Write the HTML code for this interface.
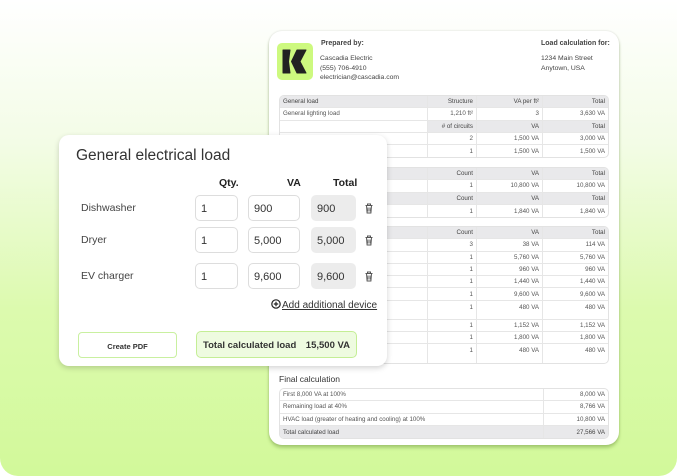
<!DOCTYPE html>
<html><head><meta charset="utf-8"><style>
*{box-sizing:border-box;margin:0;padding:0}
html,body{width:677px;height:476px;overflow:hidden;background:#fff}
body{font-family:"Liberation Sans",sans-serif;color:#222;position:relative}
.bg{position:absolute;left:0;top:0;width:677px;height:476px;border-radius:0 0 18px 18px;background:linear-gradient(180deg,#ffffff 0%,#f3fce6 30%,#dcfaae 65%,#d2f99a 100%)}
.doc{position:absolute;left:269px;top:31px;width:350px;height:414px;background:#fff;border-radius:13px;box-shadow:0 3px 3px rgba(90,130,40,.35),0 0 2px rgba(0,0,0,.15)}
.t{position:absolute;font-size:6.8px;color:#444}
table{position:absolute;left:10px;width:330px;border-collapse:separate;border-spacing:0;border:1px solid #e2e2e2;border-radius:5px;overflow:hidden;font-size:6.2px;color:#555}
td{height:12.3px;padding:0 3px;border-bottom:1px solid #e6e6e6;border-right:1px solid #e6e6e6;white-space:nowrap}
td:last-child{border-right:none}
tr:last-child td{border-bottom:none}
.h td{background:#e9e9eb;color:#444}
.r{text-align:right}
.card{position:absolute;left:59px;top:135px;width:328px;height:231px;background:#fff;border-radius:10px;box-shadow:0 2px 6px rgba(0,0,0,.18)}
.in{position:absolute;height:26px;border:1px solid #ddd;border-radius:5px;font-size:11px;padding:7px 0 0 5px;color:#333}
.gr{background:#ececec;border-color:#ececec}
.lbl{position:absolute;left:22px;font-size:10.5px;color:#444}
.hd{position:absolute;top:42px;font-size:10.5px;font-weight:bold;color:#222}
.tr{position:absolute;left:305px;width:10px;height:11px}
</style></head><body>
<div class="bg"></div>
<div class="doc">
  <svg style="position:absolute;left:8px;top:12px" width="36" height="37" viewBox="0 0 36 37"><rect width="36" height="37" rx="5" fill="#cdf97f"/><path d="M6 7h7l-1.5 11.5L13 30H6z" fill="#222" stroke="#222" stroke-width="1" stroke-linejoin="round"/><path d="M20 7h9l-6 11.5 6 11.5h-9l-5.5-11.5z" fill="#222" stroke="#222" stroke-width="1" stroke-linejoin="round"/></svg>
  <div class="t" style="left:52px;top:9px;font-weight:bold;font-size:7px">Prepared by:</div>
  <div class="t" style="left:51px;top:23px;line-height:9.5px">Cascadia Electric<br>(555) 706-4910<br>electrician@cascadia.com</div>
  <div class="t" style="left:272px;top:9px;font-weight:bold;font-size:7px">Load calculation for:</div>
  <div class="t" style="left:272px;top:23px;line-height:9.5px">1234 Main Street<br>Anytown, USA</div>
  <table style="top:64px"><colgroup><col style="width:148px"><col style="width:49px"><col style="width:66px"><col></colgroup>
  <tr class="h"><td>General load</td><td class="r">Structure</td><td class="r">VA per ft²</td><td class="r">Total</td></tr>
  <tr><td>General lighting load</td><td class="r">1,210 ft²</td><td class="r">3</td><td class="r">3,630 VA</td></tr>
  <tr class="h"><td style="background:#fff"></td><td class="r">&#35; of circuits</td><td class="r">VA</td><td class="r">Total</td></tr>
  <tr><td></td><td class="r">2</td><td class="r">1,500 VA</td><td class="r">3,000 VA</td></tr>
  <tr><td></td><td class="r">1</td><td class="r">1,500 VA</td><td class="r">1,500 VA</td></tr></table>
  <table style="top:136px"><colgroup><col style="width:148px"><col style="width:49px"><col style="width:66px"><col></colgroup>
  <tr class="h"><td></td><td class="r">Count</td><td class="r">VA</td><td class="r">Total</td></tr>
  <tr><td></td><td class="r">1</td><td class="r">10,800 VA</td><td class="r">10,800 VA</td></tr>
  <tr class="h"><td></td><td class="r">Count</td><td class="r">VA</td><td class="r">Total</td></tr>
  <tr><td></td><td class="r">1</td><td class="r">1,840 VA</td><td class="r">1,840 VA</td></tr></table>
  <table style="top:195px"><colgroup><col style="width:148px"><col style="width:49px"><col style="width:66px"><col></colgroup>
  <tr class="h"><td></td><td class="r">Count</td><td class="r">VA</td><td class="r">Total</td></tr>
  <tr><td>tinuous</td><td class="r">3</td><td class="r">38 VA</td><td class="r">114 VA</td></tr>
  <tr><td>ous</td><td class="r">1</td><td class="r">5,760 VA</td><td class="r">5,760 VA</td></tr>
  <tr><td></td><td class="r">1</td><td class="r">960 VA</td><td class="r">960 VA</td></tr>
  <tr><td></td><td class="r">1</td><td class="r">1,440 VA</td><td class="r">1,440 VA</td></tr>
  <tr><td></td><td class="r">1</td><td class="r">9,600 VA</td><td class="r">9,600 VA</td></tr>
  <tr><td style="height:19px;vertical-align:top;padding-top:3px">20V, Non-con-</td><td class="r" style="vertical-align:top;padding-top:3px">1</td><td class="r" style="vertical-align:top;padding-top:3px">480 VA</td><td class="r" style="vertical-align:top;padding-top:3px">480 VA</td></tr>
  <tr><td></td><td class="r">1</td><td class="r">1,152 VA</td><td class="r">1,152 VA</td></tr>
  <tr><td></td><td class="r">1</td><td class="r">1,800 VA</td><td class="r">1,800 VA</td></tr>
  <tr><td style="height:19px;vertical-align:top;padding-top:3px">/4 HP, 120V,</td><td class="r" style="vertical-align:top;padding-top:3px">1</td><td class="r" style="vertical-align:top;padding-top:3px">480 VA</td><td class="r" style="vertical-align:top;padding-top:3px">480 VA</td></tr></table>
  <div class="t" style="left:10px;top:343px;font-size:8.5px;color:#333">Final calculation</div>
  <table style="top:357px"><colgroup><col style="width:264px"><col></colgroup>
  <tr><td>First 8,000 VA at 100%</td><td class="r">8,000 VA</td></tr>
  <tr><td>Remaining load at 40%</td><td class="r">8,766 VA</td></tr>
  <tr><td>HVAC load (greater of heating and cooling) at 100%</td><td class="r">10,800 VA</td></tr>
  <tr class="h"><td>Total calculated load</td><td class="r">27,566 VA</td></tr></table>
</div>
<div class="card">
  <div style="position:absolute;left:17px;top:12px;font-size:15.5px;color:#333">General electrical load</div>
  <div class="hd" style="left:160px">Qty.</div>
  <div class="hd" style="left:228px">VA</div>
  <div class="hd" style="left:274px">Total</div>
  <div class="lbl" style="top:67px">Dishwasher</div>
  <div class="lbl" style="top:99px">Dryer</div>
  <div class="lbl" style="top:135px">EV charger</div>
  <div class="in" style="left:136px;top:60px;width:43px">1</div>
  <div class="in" style="left:189px;top:60px;width:52px">900</div>
  <div class="in gr" style="left:252px;top:60px;width:45px">900</div>
  <div class="in" style="left:136px;top:92px;width:43px">1</div>
  <div class="in" style="left:189px;top:92px;width:52px">5,000</div>
  <div class="in gr" style="left:252px;top:92px;width:45px">5,000</div>
  <div class="in" style="left:136px;top:128px;width:43px">1</div>
  <div class="in" style="left:189px;top:128px;width:52px">9,600</div>
  <div class="in gr" style="left:252px;top:128px;width:45px">9,600</div>
  <svg class="tr" style="top:68px" viewBox="0 0 10 11"><path d="M1.5 2.5h7M3.5 2.5V1h3v1.5M2.5 2.5l.6 7.5h3.8l.6-7.5M4 4.5v4M6 4.5v4" stroke="#555" stroke-width="1" fill="none"/></svg>
  <svg class="tr" style="top:100px" viewBox="0 0 10 11"><path d="M1.5 2.5h7M3.5 2.5V1h3v1.5M2.5 2.5l.6 7.5h3.8l.6-7.5M4 4.5v4M6 4.5v4" stroke="#555" stroke-width="1" fill="none"/></svg>
  <svg class="tr" style="top:136px" viewBox="0 0 10 11"><path d="M1.5 2.5h7M3.5 2.5V1h3v1.5M2.5 2.5l.6 7.5h3.8l.6-7.5M4 4.5v4M6 4.5v4" stroke="#555" stroke-width="1" fill="none"/></svg>
  <svg style="position:absolute;left:212px;top:164px" width="10" height="10" viewBox="0 0 10 10"><circle cx="5" cy="5" r="4.2" stroke="#222" stroke-width="1.2" fill="none"/><path d="M5 2.8v4.4M2.8 5h4.4" stroke="#222" stroke-width="1.2"/></svg>
  <div style="position:absolute;left:223px;top:165px;font-size:10px;color:#333;text-decoration:underline">Add additional device</div>
  <div style="position:absolute;left:19px;top:197px;width:99px;height:26px;border:1px solid #c9f0a0;border-radius:4px;font-size:7.5px;font-weight:bold;text-align:center;padding-top:9px;color:#333">Create PDF</div>
  <div style="position:absolute;left:137px;top:196px;width:161px;height:27px;border:1px solid #c4ee95;background:#eefbe0;border-radius:5px;font-size:9.5px;font-weight:bold;color:#333">
    <span style="position:absolute;left:6px;top:8px">Total calculated load</span><span style="position:absolute;right:6px;top:8px">15,500 VA</span></div>
</div>
</body></html>
